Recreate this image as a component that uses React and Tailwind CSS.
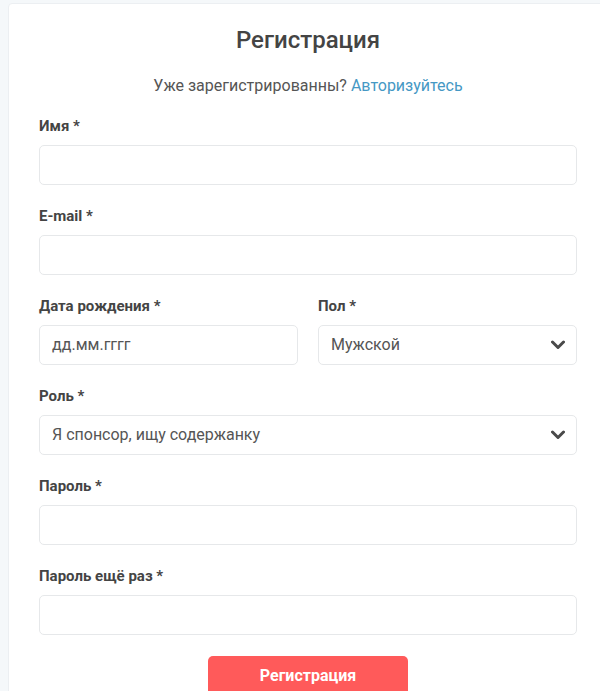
import React, { useState } from 'react';

function Chevron() {
  return (
    <svg width="14" height="10" viewBox="0 0 14 10" className="pointer-events-none absolute right-[12px] top-1/2 -translate-y-1/2">
      <path d="M1.5 2 L7 7.5 L12.5 2" fill="none" stroke="#4a4a4a" strokeWidth="3" strokeLinecap="round" strokeLinejoin="round" />
    </svg>
  );
}

function Field({ label, children }) {
  return (
    <div className="mb-[21px] flex-1">
      <label className="mb-[9px] block text-[15px] font-bold leading-5 text-[#444]">{label}</label>
      {children}
    </div>
  );
}

const inputCls =
  'h-10 w-full rounded-[5px] border border-[#e6e8ea] bg-white px-3 text-[16px] text-[#555] outline-none';

function App() {
  const [gender, setGender] = useState('male');
  const [role, setRole] = useState('sponsor');

  return (
    <div className="min-h-screen bg-[#f5f8fa] pl-2 pt-[3px] font-['Roboto',sans-serif]">
      {/* Card */}
      <div className="w-[600px] rounded-tl-[4px] border border-[#eceff2] bg-white px-[30px] pt-[20px]">
        <h1 className="text-center text-[24px] leading-8 font-medium text-[#444]">Регистрация</h1>
        <p className="mt-[18px] mb-[18px] text-center text-[16px] leading-6 text-[#555]">
          Уже зарегистрированны? <a href="#" className="text-[#4598c4]">Авторизуйтесь</a>
        </p>

        <form onSubmit={(e) => e.preventDefault()}>
          <Field label="Имя *">
            <input type="text" className={inputCls} />
          </Field>
          <Field label="E-mail *">
            <input type="email" className={inputCls} />
          </Field>

          <div className="flex gap-[20px]">
            <Field label="Дата рождения *">
              <div className={inputCls + ' flex items-center'}>дд.мм.гггг</div>
            </Field>
            <Field label="Пол *">
              <div className="relative">
                <select
                  value={gender}
                  onChange={(e) => setGender(e.target.value)}
                  className={inputCls + ' appearance-none'}
                >
                  <option value="male">Мужской</option>
                  <option value="female">Женский</option>
                </select>
                <Chevron />
              </div>
            </Field>
          </div>

          <Field label="Роль *">
            <div className="relative">
              <select
                value={role}
                onChange={(e) => setRole(e.target.value)}
                className={inputCls + ' appearance-none'}
              >
                <option value="sponsor">Я спонсор, ищу содержанку</option>
                <option value="girl">Я ищу спонсора</option>
              </select>
              <Chevron />
            </div>
          </Field>

          <Field label="Пароль *">
            <input type="password" className={inputCls} />
          </Field>
          <Field label="Пароль ещё раз *">
            <input type="password" className={inputCls} />
          </Field>

          <div className="flex justify-center">
            <button
              type="submit"
              className="h-10 w-[200px] rounded-[5px] bg-[#ff5a5a] text-[16px] font-bold text-white"
            >
              Регистрация
            </button>
          </div>
        </form>
      </div>
    </div>
  );
}

export default App;
